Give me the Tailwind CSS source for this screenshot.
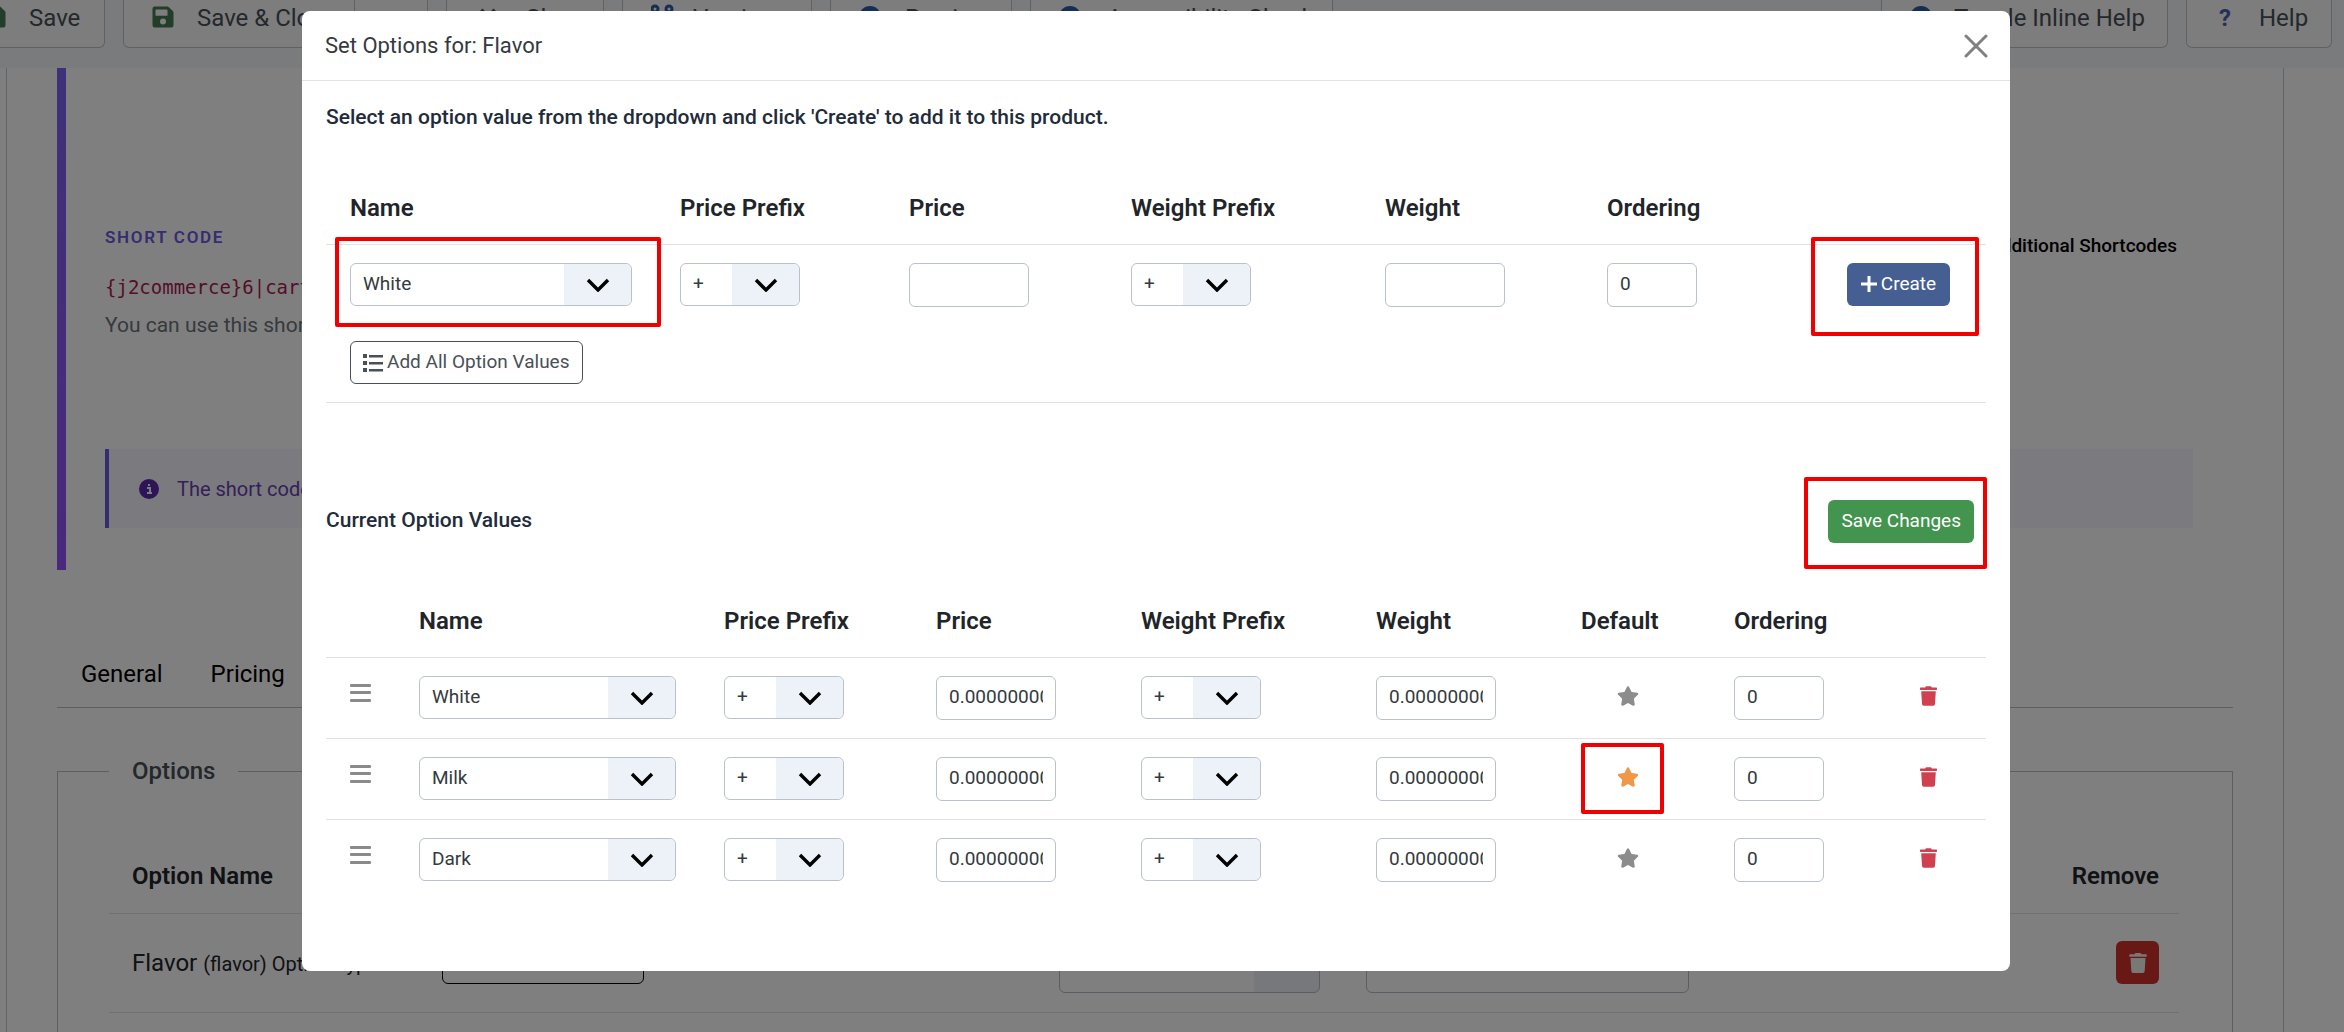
<!DOCTYPE html>
<html lang="en">
<head>
<meta charset="utf-8">
<meta name="viewport" content="width=device-width, initial-scale=1">
<title>Set Options</title>
<script src="https://cdn.jsdelivr.net/npm/@tailwindcss/browser@4"></script>
</head>
<body class="bg-white font-['Roboto',sans-serif] text-[#212529]">

<svg class="hidden" aria-hidden="true">
  <symbol id="chevron" viewBox="0 0 24 14"><path d="M2 2l10 10L22 2" fill="none" stroke="#000" stroke-width="3.4"/></symbol>
  <symbol id="trash" viewBox="0 0 448 512"><path fill="currentColor" d="M432 32H312l-9-19a24 24 0 0 0-22-13H167a24 24 0 0 0-22 13l-9 19H16A16 16 0 0 0 0 48v32a16 16 0 0 0 16 16h416a16 16 0 0 0 16-16V48a16 16 0 0 0-16-16zM32 128l21 339a48 48 0 0 0 48 45h246a48 48 0 0 0 48-45l21-339z"/></symbol>
  <symbol id="star" viewBox="0 0 576 512"><path fill="currentColor" d="M259 18l-65 132-146 21c-26 4-37 36-18 55l106 103-25 145c-5 26 23 46 46 34l131-69 131 69c23 12 51-8 46-34l-25-145 106-103c19-19 8-51-18-55l-146-21-65-132c-12-23-46-24-58 0z"/></symbol>
  <symbol id="save" viewBox="0 0 448 512"><path fill="currentColor" fill-rule="evenodd" d="M434 130L350 46a48 48 0 0 0-34-14H48A48 48 0 0 0 0 80v352a48 48 0 0 0 48 48h352a48 48 0 0 0 48-48V164a48 48 0 0 0-14-34zM224 416a64 64 0 1 1 0-128 64 64 0 0 1 0 128zm96-304v104a12 12 0 0 1-12 12H76a12 12 0 0 1-12-12V108a12 12 0 0 1 12-12h228z"/></symbol>
</svg>

<div class="h-screen overflow-hidden">
  <!-- Toolbar -->
  <header class="flex h-[68px] items-start gap-[18px] bg-[#f4f7f9] pr-3 text-2xl leading-9 text-[#495057]">
    <button class="flex h-12 w-[105px] shrink-0 rounded-br-md border-r border-b border-[#bfc4c8] bg-[#fafbfb] text-left"><svg class="-ml-4 mt-[5px] mr-[23px] h-6 w-[22px] shrink-0 text-[#457d54]"><use href="#save"/></svg>Save</button>
    <div class="flex h-12 w-[305px] shrink-0 rounded-b-md border border-t-0 border-[#bfc4c8] bg-[#fafbfb]">
      <button class="flex w-[231px] border-r border-[#bfc4c8] pl-7"><svg class="mt-[5px] mr-[23px] h-6 w-[22px] text-[#457d54]"><use href="#save"/></svg>Save &amp; Close</button>
      <button class="flex-1" aria-label="More save actions"></button>
    </div>
    <button class="flex h-12 w-[158px] shrink-0 rounded-b-md border border-t-0 border-[#bfc4c8] bg-[#fafbfb] pl-8"><svg class="mt-2 mr-7 size-[18px]" viewBox="0 0 18 18" fill="none" stroke="#495057" stroke-width="4"><path d="M2 2l14 14M16 2L2 16"/></svg>Close</button>
    <button class="flex h-12 w-[190px] shrink-0 rounded-b-md border border-t-0 border-[#bfc4c8] bg-[#fafbfb] pl-7">
      <svg class="mt-1 mr-[18px] size-6" viewBox="0 0 24 24" fill="none" stroke="#2a5da8" stroke-width="3"><circle cx="4" cy="5" r="3"/><circle cx="18" cy="5" r="3"/><path d="M4 8v14M18 8q0 6-14 8"/></svg>Versions</button>
    <button class="flex h-12 w-[182px] shrink-0 rounded-b-md border border-t-0 border-[#bfc4c8] bg-[#fafbfb] pl-7">
      <span class="mt-[6px] mr-6 size-[22px] rounded-full bg-[#2a5da8]"></span>Preview</button>
    <button class="flex h-12 w-[303px] shrink-0 rounded-b-md border border-t-0 border-[#bfc4c8] bg-[#fafbfb] pl-7">
      <span class="mt-[6px] mr-[26px] size-[22px] rounded-full bg-[#2a5da8]"></span>Accessibility Check</button>
    <button class="ml-auto flex h-12 w-[287px] shrink-0 rounded-b-md border border-t-0 border-[#bfc4c8] bg-[#fafbfb] pl-7">
      <span class="mt-[6px] mr-[22px] size-[22px] rounded-full bg-[#2a5da8]"></span>Toggle Inline Help</button>
    <button class="flex h-12 w-[146px] shrink-0 rounded-b-md border border-t-0 border-[#bfc4c8] bg-[#fafbfb] pl-8"><span class="mr-7 font-bold text-[#4a62b0]">?</span>Help</button>
  </header>

  <main class="mr-[60px] ml-[6px] border-x border-[#c4cad0] pr-[50px] pl-[50px]">
    <!-- Short code panel -->
    <section class="flex h-[502px]">
      <div class="w-[9px] bg-linear-to-b from-[#7f60f4] to-[#9152fa]"></div>
      <div class="flex flex-1 flex-col pr-10 pl-[39px] text-[21px]">
        <div class="mt-[156px] flex h-[113px] justify-between">
          <div>
            <h2 class="pt-px text-[17px] leading-6 font-semibold tracking-widest text-[#6a5ae0]">SHORT CODE</h2>
            <p class="mt-6 font-['DejaVu_Sans_Mono',monospace] text-[19px] leading-7 text-[#a81d4e]">{j2commerce}6|cart{/j2commerce}</p>
            <p class="mt-3 leading-6 text-[#6c757d]">You can use this short code in your articles</p>
          </div>
          <button class="h-11 px-4 text-[19px] font-medium text-black">Additional Shortcodes</button>
        </div>
        <div class="mt-28 flex h-[79px] items-center border-l-4 border-[#6a5ae0] bg-[#f7f5ff] pl-[30px] text-xl text-[#6b3fb0]">
          <svg class="mr-[18px] size-5" viewBox="0 0 20 20"><circle cx="10" cy="10" r="10" fill="#5a2ab0"/><path d="M8 9h3v5m-3 0h5M10 5v2" fill="none" stroke="#fff" stroke-width="2"/></svg>
          The short code renders this product
        </div>
      </div>
    </section>

    <nav class="mt-[70px] flex h-[68px] gap-12 border-b border-[#b9bdc1] pt-4 pl-6 text-2xl leading-9 text-black">
      <a href="#general">General</a><a href="#pricing">Pricing</a>
    </nav>

    <fieldset class="mt-[45px] h-[400px] border border-[#b9bdc1] pr-[53px] pl-[51px]">
      <legend class="px-[23px] text-2xl leading-9 font-medium text-[#495057]">Options</legend>
      <table class="mt-[51px] w-full table-fixed text-left text-2xl">
        <colgroup><col class="w-[310px]"><col class="w-[617px]"><col class="w-[307px]"><col><col class="w-[200px]"></colgroup>
        <thead><tr class="h-[73px] border-b border-[#dee2e6]"><th class="px-[23px] font-semibold">Option Name</th><th></th><th></th><th></th><th class="px-5 text-right font-semibold">Remove</th></tr></thead>
        <tbody><tr class="h-[99px] border-b border-[#dee2e6]">
          <td class="px-[23px] whitespace-nowrap">Flavor <span class="text-xl">(flavor) Option Type</span></td>
          <td class="px-[23px]"><button class="block h-[43px] w-[202px] rounded-md border border-black" aria-label="Set option values"></button></td>
          <td class="px-[23px]"><select aria-label="Required" class="mt-4 block h-11 w-full appearance-none rounded-md border border-[#b4bcc8] bg-white bg-linear-to-r from-transparent from-75% to-[#edf1f7] to-75%"></select></td>
          <td class="px-[23px]"><input aria-label="Option ordering" class="mt-4 block h-11 w-[323px] rounded-md border border-[#b4bcc8]"></td>
          <td class="px-5"><button aria-label="Remove" class="ml-auto flex h-[43px] w-[43px] items-center justify-center rounded-md bg-[#d0302b] text-[#f0f0e8]"><svg class="h-5 w-[18px]"><use href="#trash"/></svg></button></td>
        </tr></tbody>
      </table>
    </fieldset>
  </main>
</div>

<!-- Modal -->
<div class="fixed inset-0 bg-black/50 pt-[11px] pr-[334px] pl-[302px]">
  <div role="dialog" aria-labelledby="title" class="rounded-lg bg-white pb-[71px]">
    <header class="flex h-[70px] items-center justify-between border-b border-[#dee2e6] pr-[22px] pl-[23px]">
      <h1 id="title" class="text-[22px] text-[#343a40]">Set Options for: Flavor</h1>
      <button aria-label="Close"><svg class="size-6" viewBox="0 0 24 24" fill="none" stroke="#808080" stroke-width="3" stroke-linecap="round"><path d="M2 2l20 20M22 2L2 22"/></svg></button>
    </header>

    <div class="px-6">
      <h2 class="pt-[22px] text-[21px] leading-7 font-medium text-[#212b3a]">Select an option value from the dropdown and click 'Create' to add it to this product.</h2>

      <table class="mt-[39px] w-full table-fixed text-left">
        <colgroup><col class="w-[330px]"><col class="w-[229px]"><col class="w-[222px]"><col class="w-[254px]"><col class="w-[222px]"><col class="w-[240px]"><col></colgroup>
        <thead><tr class="h-[74px] border-b border-[#dee2e6] text-2xl *:pt-[2px]">
          <th class="pl-6 font-semibold">Name</th><th class="pl-6 font-semibold">Price Prefix</th><th class="pl-6 font-semibold">Price</th><th class="pl-6 font-semibold">Weight Prefix</th><th class="pl-6 font-semibold">Weight</th><th class="pl-6 font-semibold">Ordering</th><th></th>
        </tr></thead>
        <tbody id="create"></tbody>
      </table>
      <div class="border-b border-[#dee2e6] px-6 pt-4 pb-[18px]">
        <button class="flex h-[43px] items-center gap-1 rounded-md border border-[#495057] px-3 text-[19px] text-[#495057]">
          <svg class="size-5" viewBox="0 0 20 20" fill="currentColor"><path d="M0 1h4v4H0zM6 2h14v2.500H6zM0 8h4v4H0zM6 9h14v2.500H6zM0 15h4v4H0zM6 16h14v2.500H6z"/></svg>Add All Option Values</button>
      </div>

      <div class="mt-24 flex h-11 items-center justify-between pr-3">
        <h2 class="text-[21px] font-medium text-[#212b3a]">Current Option Values</h2>
        <div class="relative">
          <button class="block h-[43px] rounded-md bg-[#42944f] px-[13px] text-[19px] text-white">Save Changes</button>
          <span class="pointer-events-none absolute -top-[23px] -right-[13px] -bottom-[26px] -left-6 rounded-xs border-4 border-[#f00000]"></span>
        </div>
      </div>

      <table class="mt-10 w-full table-fixed text-left">
        <colgroup><col class="w-[69px]"><col class="w-[305px]"><col class="w-[212px]"><col class="w-[205px]"><col class="w-[235px]"><col class="w-[205px]"><col class="w-[153px]"><col class="w-[186px]"><col></colgroup>
        <thead><tr class="h-[74px] border-b border-[#dee2e6] text-2xl *:pt-[2px]">
          <th></th><th class="pl-6 font-semibold">Name</th><th class="pl-6 font-semibold">Price Prefix</th><th class="pl-6 font-semibold">Price</th><th class="pl-6 font-semibold">Weight Prefix</th><th class="pl-6 font-semibold">Weight</th><th class="pl-6 font-semibold">Default</th><th class="pl-6 font-semibold">Ordering</th><th></th>
        </tr></thead>
        <tbody id="values"></tbody>
      </table>
    </div>
  </div>
</div>

<script>
  const select = (label, value, width) => `
    <div class="relative ${width}">
      <select aria-label="${label}" class="block h-[43px] w-full appearance-none rounded-md border border-[#b9c1cc] bg-white pb-px pl-3 text-[19px] text-[#343a40]"><option>${value}</option></select>
      <span class="pointer-events-none absolute inset-y-px right-px flex w-[67px] items-center justify-center rounded-r-md bg-[#edf2f8]"><svg class="mt-px h-[14px] w-6"><use href="#chevron"/></svg></span>
    </div>`;
  const input = (label, value, width) => `<input aria-label="${label}" value="${value}" class="block h-11 rounded-md border border-[#b9c1cc] bg-white px-3 pb-[2px] text-[19px] text-[#343a40] ${width}">`;

  document.getElementById('create').innerHTML = `
    <tr class="h-[81px]">
      <td class="pl-6"><div class="relative w-[282px]">${select('Name', 'White', 'w-full')}
        <span class="pointer-events-none absolute -top-[26px] -right-[29px] -bottom-[21px] -left-[15px] rounded-xs border-4 border-[#f00000]"></span></div></td>
      <td class="pl-6">${select('Price prefix', '+', 'w-[120px]')}</td>
      <td class="pl-6">${input('Price', '', 'w-[120px]')}</td>
      <td class="pl-6">${select('Weight prefix', '+', 'w-[120px]')}</td>
      <td class="pl-6">${input('Weight', '', 'w-[120px]')}</td>
      <td class="pl-6">${input('Ordering', '0', 'w-[90px]')}</td>
      <td class="pl-6"><div class="relative w-[103px]">
        <button class="flex h-[43px] w-full items-center justify-center gap-1 rounded-md bg-[#455f92] pb-px text-[19px] text-white"><svg class="size-4" viewBox="0 0 16 16"><path d="M8 0v16M0 8h16" stroke="#fff" stroke-width="3"/></svg>Create</button>
        <span class="pointer-events-none absolute -top-[26px] -right-[29px] -bottom-[30px] -left-9 rounded-xs border-4 border-[#f00000]"></span></div></td>
    </tr>`;

  const row = (name, isDefault) => `
    <tr class="h-[81px] border-b border-[#dee2e6] last:border-b-0">
      <td class="pl-6"><svg class="-mt-[10px] h-5 w-[21px]" viewBox="0 0 21 20" fill="#8a8a8a"><rect width="21" height="3" y="1" rx="1"/><rect width="21" height="3" y="8" rx="1"/><rect width="21" height="3" y="16" rx="1"/></svg></td>
      <td class="pl-6">${select('Name', name, 'w-[257px]')}</td>
      <td class="pl-6">${select('Price prefix', '+', 'w-[120px]')}</td>
      <td class="pl-6">${input('Price', '0.00000000', 'w-[120px]')}</td>
      <td class="pl-6">${select('Weight prefix', '+', 'w-[120px]')}</td>
      <td class="pl-6">${input('Weight', '0.00000000', 'w-[120px]')}</td>
      <td class="pl-6"><div class="relative flex h-[71px] w-[83px] items-center justify-center pl-[10px]">
        <button aria-label="Default" class="${isDefault ? 'text-[#f0984a]' : 'text-[#8c8c8c]'}"><svg class="-mt-1 h-5 w-[22px]"><use href="#star"/></svg></button>
        ${isDefault ? '<span class="pointer-events-none absolute inset-0 rounded-xs border-4 border-[#f00000]"></span>' : ''}</div></td>
      <td class="pl-6">${input('Ordering', '0', 'w-[90px]')}</td>
      <td class="pl-6"><button aria-label="Delete" class="block text-[#d0404f]"><svg class="-mt-1 h-5 w-[17px]"><use href="#trash"/></svg></button></td>
    </tr>`;
  document.getElementById('values').innerHTML = row('White', false) + row('Milk', true) + row('Dark', false);
</script>
</body>
</html>
